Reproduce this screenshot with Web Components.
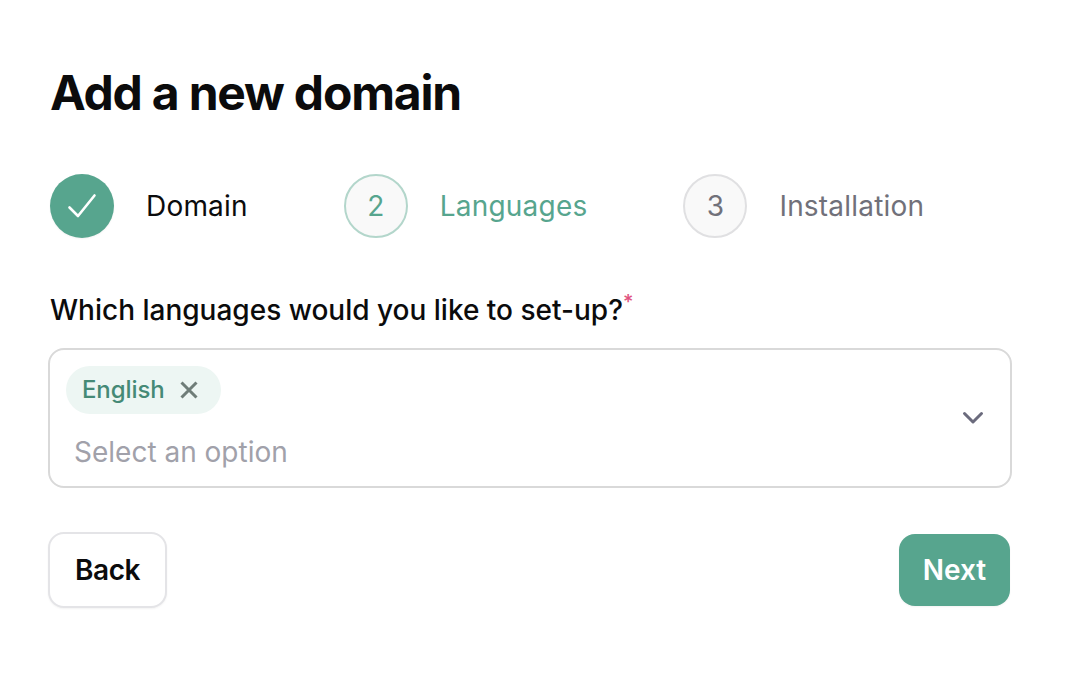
<!DOCTYPE html>
<html>
<head>
<meta charset="utf-8">
<title>Add a new domain</title>
<style>
html, body { margin: 0; background: #fff; font-family: Inter, "Liberation Sans", sans-serif; color: #0b0b0c; }
</style>
</head>
<body>
<domain-form>
	<form-steps>
		<form-step state="done" label="Domain"></form-step>
		<form-step state="current" number="2" label="Languages"></form-step>
		<form-step number="3" label="Installation"></form-step>
	</form-steps>
	<language-select label="Which languages would you like to set-up?" placeholder="Select an option">
		<lang-chip>English</lang-chip>
	</language-select>
</domain-form>

<script>
customElements.define('domain-form', class extends HTMLElement {
	constructor() {
		super();
		this.attachShadow({ mode: 'open' });
		this.shadowRoot.innerHTML = `
			<style>
			:host { display: block; box-sizing: border-box; width: 1068px; height: 676px; padding: 63px 56px 0 48px; }
			h1 { margin: 0 0 51px 2px; font-size: 48px; line-height: 60px; font-weight: 700; letter-spacing: -1.2px; color: #0b0b0c; }
			.actions { display: flex; justify-content: space-between; align-items: center; margin-top: 44px; }
			button { font: 600 28px/34px Inter, sans-serif; border-radius: 16px; box-sizing: border-box; }
			.back { width: 119px; height: 76px; background: #fff; color: #0b0b0c; border: 2px solid #e4e4e7; box-shadow: 0 1px 2px rgba(0,0,0,.05); letter-spacing: -0.4px; }
			.next { width: 111px; height: 72px; margin-right: 2px; background: #57a58e; color: #fff; border: 0; box-shadow: 0 1px 2px rgba(0,0,0,.05); }
			</style>
			<h1>Add a new domain</h1>
			<slot></slot>
			<div class="actions">
				<button class="back" type="button">Back</button>
				<button class="next" type="button">Next</button>
			</div>
		`;
	}
});

customElements.define('form-steps', class extends HTMLElement {
	constructor() {
		super();
		this.attachShadow({ mode: 'open' });
		this.shadowRoot.innerHTML = `
			<style>
			:host { display: flex; gap: 96px; padding-left: 2px; margin-bottom: 52px; }
			</style>
			<slot></slot>
		`;
	}
});

customElements.define('form-step', class extends HTMLElement {
	constructor() {
		super();
		this.attachShadow({ mode: 'open' });
		const number = this.getAttribute('number') || '';
		const mark = this.getAttribute('state') === 'done'
			? `<svg width="32" height="32" viewBox="0 0 32 32" fill="none"><path d="M3.5 17.5 L12 26 L28.5 5.5" stroke="#fff" stroke-width="2.6" stroke-linecap="round" stroke-linejoin="round"/></svg>`
			: number;
		this.shadowRoot.innerHTML = `
			<style>
			:host { display: flex; align-items: center; gap: 32px; font-size: 28px; line-height: 40px; letter-spacing: 0.2px; color: #71717a; }
			.circle { box-sizing: border-box; width: 64px; height: 64px; border-radius: 50%; display: flex; align-items: center; justify-content: center; background: #f9f9f9; border: 2px solid #e0e0e2; }
			:host([state="done"]) { color: #0b0b0c; }
			:host([state="done"]) .circle { background: #57a58e; border: 0; box-shadow: 0 1px 2px rgba(0,0,0,.05); }
			:host([state="current"]) { color: #57a58e; }
			:host([state="current"]) .circle { border-color: #b3d6cb; }
			</style>
			<span class="circle">${mark}</span>
			<span>${this.getAttribute('label')}</span>
		`;
	}
});

customElements.define('language-select', class extends HTMLElement {
	constructor() {
		super();
		this.attachShadow({ mode: 'open' });
		this.shadowRoot.innerHTML = `
			<style>
			:host { display: block; }
			label { display: block; margin: 0 0 18px 2px; font-size: 28px; line-height: 40px; font-weight: 500; color: #0b0b0c; }
			sup { color: #e0527f; font-size: 20px; line-height: 0; vertical-align: 11px; }
			.box { box-sizing: border-box; height: 140px; border: 2px solid #d9d9d9; border-radius: 16px; padding: 16px 26px 16px 16px; display: flex; align-items: center; justify-content: space-between; }
			.values { align-self: flex-start; display: flex; flex-direction: column; align-items: flex-start; gap: 18px; }
			.placeholder { margin-left: 8px; font-size: 28px; line-height: 40px; color: #a1a1aa; }
			svg { display: block; }
			</style>
			<label>${this.getAttribute('label')}<sup>*</sup></label>
			<div class="box">
				<div class="values">
					<slot></slot>
					<span class="placeholder">${this.getAttribute('placeholder')}</span>
				</div>
				<svg width="22" height="22" viewBox="0 0 22 22" fill="none"><path d="M2.5 6.5 L11 15 L19.5 6.5" stroke="#6b6b7d" stroke-width="3" stroke-linecap="round" stroke-linejoin="round"/></svg>
			</div>
		`;
	}
});

customElements.define('lang-chip', class extends HTMLElement {
	constructor() {
		super();
		this.attachShadow({ mode: 'open' });
		this.shadowRoot.innerHTML = `
			<style>
			:host { display: inline-flex; align-items: center; gap: 15px; height: 48px; padding: 0 23px 0 16px; border-radius: 24px; background: #edf6f3; font-size: 24px; font-weight: 500; letter-spacing: -0.1px; color: #458a76; }
			slot { display: block; margin-bottom: 2px; }
			svg { display: block; }
			</style>
			<slot></slot>
			<svg width="18" height="18" viewBox="0 0 18 18" fill="none"><path d="M1.5 1.5 L16.5 16.5 M16.5 1.5 L1.5 16.5" stroke="#6f7d78" stroke-width="3"/></svg>
		`;
	}
});
</script>
</body>
</html>
